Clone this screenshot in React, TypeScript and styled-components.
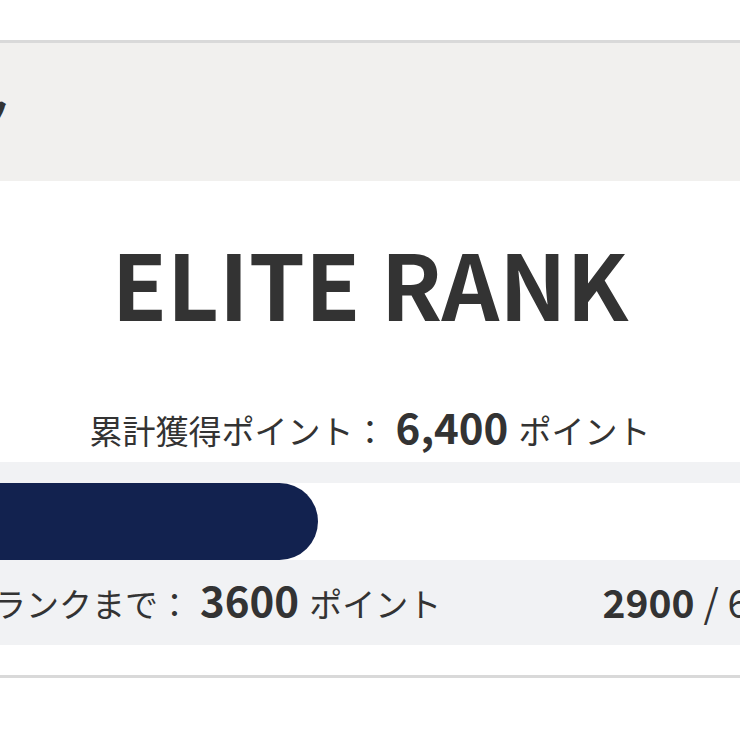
import React from 'react';
import styled, { createGlobalStyle } from 'styled-components';

const GlobalStyle = createGlobalStyle`
  body {
    margin: 0;
    background: #fff;
    font-family: "Noto Sans CJK JP", "Noto Sans", sans-serif;
    color: #333;
  }
`;

const Page = styled.div`
  width: 100%;
  overflow: hidden;
  padding-top: 40px;
  padding-bottom: 62px;
`;

const Card = styled.section`
  width: 1040px;
  margin-left: -150px;
  border-top: 3px solid #d9d9d9;
  border-bottom: 3px solid #d9d9d9;
`;

const Header = styled.header`
  height: 138px;
  background: #f1f0ee;
  display: flex;
  align-items: center;
  padding-left: 40px;
`;

const HeaderTitle = styled.h2`
  margin: 0;
  font-size: 40px;
  font-weight: 700;
  line-height: 1;
`;

const Body = styled.div`
  padding-bottom: 30px;
  text-align: center;
`;

const RankName = styled.h1`
  margin: 56px 0 0;
  font-size: 90px;
  font-weight: 700;
  line-height: 1;
`;

const TotalRow = styled.p`
  margin: 74px 0 0;
  display: flex;
  justify-content: center;
  align-items: baseline;
  line-height: 50px;
`;

const Label = styled.span`
  font-size: 33px;
`;

const Value = styled.strong<{ gap?: boolean; size?: number }>`
  font-size: ${props => props.size ?? 42}px;
  font-weight: 700;
  margin: 0 ${props => (props.gap ? '10px' : '0')} 0 ${props => (props.gap ? '9px' : '0')};
`;

const ProgressPanel = styled.div`
  margin-top: 7px;
  background: #f1f2f4;
  padding: 21px 40px 0;
`;

const Track = styled.div`
  height: 77px;
  background: #fff;
  border-radius: 38.5px;
  overflow: hidden;
`;

const Fill = styled.div`
  height: 100%;
  background: #12224f;
  border-radius: 38.5px;
`;

const Footer = styled.div`
  box-sizing: border-box;
  height: 85px;
  display: flex;
  justify-content: space-between;
  align-items: center;
  padding: 0 36px 4px 37px;
  line-height: 50px;
`;

const FooterItem = styled.div`
  display: flex;
  align-items: baseline;
`;

const Fraction = styled.span`
  font-size: 39px;
`;

const current = 2900;
const goal = 6500;

export default function App() {
  return (
    <>
      <GlobalStyle />
      <Page>
        <Card>
          <Header>
            <HeaderTitle>ランク</HeaderTitle>
          </Header>
          <Body>
            <RankName>ELITE RANK</RankName>
            <TotalRow>
              <Label>累計獲得ポイント：</Label>
              <Value gap>6,400</Value>
              <Label>ポイント</Label>
            </TotalRow>
            <ProgressPanel>
              <Track>
                <Fill style={{ width: `${(current / goal) * 100}%` }} />
              </Track>
              <Footer>
                <FooterItem>
                  <Label>次のランクまで：</Label>
                  <Value gap>{goal - current}</Value>
                  <Label>ポイント</Label>
                </FooterItem>
                <FooterItem>
                  <Value size={39}>{current}</Value>
                  <Fraction>&nbsp;/ {goal}</Fraction>
                </FooterItem>
              </Footer>
            </ProgressPanel>
          </Body>
        </Card>
      </Page>
    </>
  );
}
